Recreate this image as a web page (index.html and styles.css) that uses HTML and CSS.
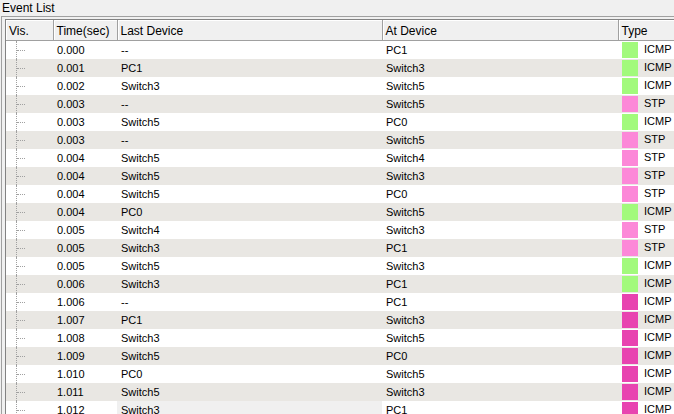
FILE: index.html
```html
<!DOCTYPE html>
<html lang="en">

<head>
    <meta charset="UTF-8">
    <meta name="viewport" content="width=device-width, initial-scale=1.0">
    <title>Event List</title>
    <link rel="stylesheet" href="styles.css">
</head>

<body>
    <div class="title">Event List</div>
    <div class="frame">
        <div class="panel">
            <table class="events">
                <colgroup>
                    <col class="c-vis">
                    <col class="c-time">
                    <col class="c-last">
                    <col class="c-at">
                    <col class="c-type">
                </colgroup>
                <thead>
                    <tr>
                        <th>Vis.</th>
                        <th>Time(sec)</th>
                        <th>Last Device</th>
                        <th>At Device</th>
                        <th>Type</th>
                    </tr>
                </thead>
                <tbody id="rows"></tbody>
            </table>
        </div>
    </div>

    <script>
        const events = [
            ["0.000", "--", "PC1", "icmp"],
            ["0.001", "PC1", "Switch3", "icmp"],
            ["0.002", "Switch3", "Switch5", "icmp"],
            ["0.003", "--", "Switch5", "stp"],
            ["0.003", "Switch5", "PC0", "icmp"],
            ["0.003", "--", "Switch5", "stp"],
            ["0.004", "Switch5", "Switch4", "stp"],
            ["0.004", "Switch5", "Switch3", "stp"],
            ["0.004", "Switch5", "PC0", "stp"],
            ["0.004", "PC0", "Switch5", "icmp"],
            ["0.005", "Switch4", "Switch3", "stp"],
            ["0.005", "Switch3", "PC1", "stp"],
            ["0.005", "Switch5", "Switch3", "icmp"],
            ["0.006", "Switch3", "PC1", "icmp"],
            ["1.006", "--", "PC1", "icmp2"],
            ["1.007", "PC1", "Switch3", "icmp2"],
            ["1.008", "Switch3", "Switch5", "icmp2"],
            ["1.009", "Switch5", "PC0", "icmp2"],
            ["1.010", "PC0", "Switch5", "icmp2"],
            ["1.011", "Switch5", "Switch3", "icmp2"],
            ["1.012", "Switch3", "PC1", "icmp2"]
        ];

        const tbody = document.getElementById("rows");
        events.forEach((ev, i) => {
            const [time, last, at, kind] = ev;
            const label = kind === "stp" ? "STP" : "ICMP";
            const tr = document.createElement("tr");
            if (i % 2 === 1) tr.className = "alt";
            const lastClass = i === events.length - 1 ? ' class="hover"' : "";
            tr.innerHTML = `
                <td class="vis"><div class="tree"><span class="branch"></span></div></td>
                <td>${time}</td>
                <td${lastClass}>${last}</td>
                <td>${at}</td>
                <td class="type"><span class="swatch ${kind}"></span>${label}</td>`;
            tbody.appendChild(tr);
        });
    </script>
</body>

</html>
```

FILE: styles.css
```css
* {
    box-sizing: border-box;
}

body {
    margin: 0;
    background-color: #f0f0f0;
    font-family: "Liberation Sans", Arial, sans-serif;
    font-size: 11px;
    color: #000;
    overflow: hidden;
    height: 414px;
}

.title {
    height: 16px;
    padding-left: 2px;
    font-size: 12px;
    line-height: 16px;
}

.frame {
    margin-left: 1px;
    border-top: 1px solid #a0a0a0;
    border-left: 1px solid #a0a0a0;
    padding: 2px 0 0 3px;
    height: 398px;
}

.panel {
    border-top: 1px solid #828282;
    border-left: 1px solid #828282;
    background-color: #fff;
    height: 100%;
    overflow: hidden;
}

.events {
    border-collapse: collapse;
    table-layout: fixed;
    width: 700px;
}

.c-vis { width: 47px; }
.c-time { width: 64px; }
.c-last { width: 265px; }
.c-at { width: 236px; }
.c-type { width: 88px; }

th {
    height: 20px;
    padding: 0 0 0 3px;
    background-color: #f0f0f0;
    font-weight: normal;
    font-size: 12px;
    text-align: left;
    border-top: 1px solid #fff;
    border-bottom: 1px solid #a0a0a0;
    border-right: 1px solid #a0a0a0;
    box-shadow: inset 1px 0 0 #fff;
}

td {
    height: 18px;
    padding: 0 0 0 4px;
    white-space: nowrap;
    vertical-align: middle;
}

tr.alt td {
    background-color: #e9e7e3;
}

td.hover {
    background-color: #f0f0f0;
}

td.vis {
    padding: 0 0 0 10px;
}

.tree {
    height: 18px;
    border-left: 1px dotted #a0a0a0;
    display: flex;
    align-items: center;
}

.branch {
    width: 8px;
    border-top: 1px dotted #a0a0a0;
}

td.type {
    padding-left: 4px;
}

.swatch {
    display: inline-block;
    width: 16px;
    height: 16px;
    margin-right: 6px;
    vertical-align: middle;
}

.swatch.icmp { background-color: #a2fa7c; }
.swatch.stp { background-color: #fc88d8; }
.swatch.icmp2 { background-color: #e844b0; }
```
